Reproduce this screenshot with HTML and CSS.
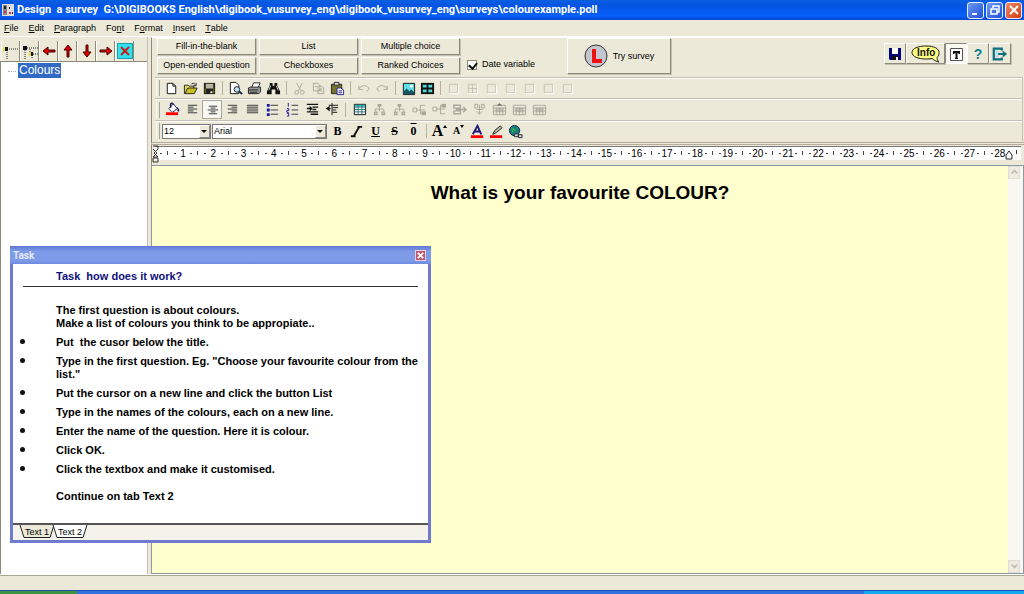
FILE: index.html
```html
<!DOCTYPE html>
<html lang="en">
<head>
<meta charset="utf-8">
<title>Design a survey</title>
<link rel="stylesheet" href="styles.css">
</head>
<body>
<svg class="defs" aria-hidden="true">
  <defs>
    <symbol id="arrow" viewBox="0 0 16 16"><path d="M2 8l5-4v3h7v2H7v3z" fill="#e00000" stroke="#400" stroke-width="1"/></symbol>
    <symbol id="tree" viewBox="0 0 16 16"><path d="M8 3v4M3.500 10V7.500h9V10M8 7v3" fill="none" stroke="#aaa89a"/><path d="M6 2h4v3H6zM2 10h4v4H2zM10 10h4v4h-4z" fill="#aaa89a"/><path d="M11.500 11.500h1v1h-1zM3.500 11.500h1v1h-1z" fill="#ece9d8"/></symbol>
    <symbol id="join" viewBox="0 0 16 16"><path d="M1 6.500h4v4H1zM5 8.500h4M9 3.500h5M9 3v10M9 8.500h5" fill="none" stroke="#aaa89a"/><path d="M10 10h5v4h-5z" fill="#aaa89a"/></symbol>
    <symbol id="cells" viewBox="0 0 16 16"><path d="M1.500 3.500h13v10h-13zM1 6.500h14M1 9.500h14M4.500 6v8M8 6v8M11.500 6v8" fill="none" stroke="#aaa89a"/><path d="M4 6h8v5H4z" fill="#aaa89a" opacity=".6"/></symbol>
    <symbol id="box" viewBox="0 0 16 16"><path d="M3.500 3.500h9v9h-9z" fill="none" stroke="#c6c3b5"/><path d="M13.500 4v9.500H4" fill="none" stroke="#fff"/></symbol>
    <symbol id="window" viewBox="0 0 16 16"><path d="M1 2h14v12H1z" fill="#111"/><path d="M3 4h4v3H3zM9 4h4v3H9zM3 9h4v3H3zM9 9h4v3H9z" fill="#50dcdc"/></symbol>
    <symbol id="floppy" viewBox="0 0 16 16"><path d="M2 2h12v12H3l-1-1z"/><path d="M5 2h6v6H5z" fill="#fff"/><path d="M5 10h6v4H5z" fill="#111"/><path d="M9 11h2v3H9z" fill="#fff"/></symbol>
  </defs>
</svg>

<header class="titlebar">
  <svg class="app-icon" viewBox="0 0 12 14"><path d="M0 1h12v12H0z" fill="#ddd"/><path d="M1 2h4v10H1z" fill="#888"/><path d="M2 3h2v3H2zM7 4h1v2H7zM10 9h1v2h-1z" fill="#222"/><path d="M7 9h2v2H7zM2 8h2v2H2z" fill="#c33"/></svg>
  <h1>Design&nbsp; a survey&nbsp; G:\DIGIBOOKS English\digibook_vusurvey_eng\digibook_vusurvey_eng\surveys\colourexample.poll</h1>
  <div class="window-buttons">
    <button aria-label="Minimize"><svg viewBox="0 0 16 16"><path d="M4 11h5v2H4z" fill="#fff"/></svg></button>
    <button aria-label="Restore"><svg viewBox="0 0 16 16"><path d="M6 6V4h6v6h-2M4 7h6v5H4z" fill="none" stroke="#fff" stroke-width="1.500"/></svg></button>
    <button class="close" aria-label="Close"><svg viewBox="0 0 16 16"><path d="M4 4l8 8M12 4l-8 8" stroke="#fff" stroke-width="2"/></svg></button>
  </div>
</header>

<nav class="menubar">
  <button><u>F</u>ile</button><button><u>E</u>dit</button><button><u>P</u>aragraph</button><button>Fo<u>n</u>t</button><button>F<u>o</u>rmat</button><button><u>I</u>nsert</button><button><u>T</u>able</button>
</nav>

<main class="workspace">
  <aside class="sidebar">
    <div class="tree-tools">
      <button aria-label="Add item"><svg viewBox="0 0 16 16"><path d="M4 6h12M4 7v9" stroke="#222" stroke-dasharray="1 1" fill="none"/><path d="M0 4h3v4H0z" fill="#e8e040"/><path d="M2 4h3v4H2z" fill="#111"/></svg></button>
      <button aria-label="Add child"><svg viewBox="0 0 16 16"><path d="M3 5h13M3 7v9M8 6v5h8M10 12v4" stroke="#222" stroke-dasharray="1 1" fill="none"/><path d="M1 3h4v4H1z" fill="#111"/><path d="M7 9h4v4H7z" fill="#e8e040"/><path d="M9 9h2v4H9z" fill="#111"/></svg></button>
      <button aria-label="Left"><svg viewBox="0 0 16 16"><use href="#arrow"/></svg></button>
      <button aria-label="Up"><svg class="up" viewBox="0 0 16 16"><use href="#arrow"/></svg></button>
      <button aria-label="Down"><svg class="down" viewBox="0 0 16 16"><use href="#arrow"/></svg></button>
      <button aria-label="Right"><svg class="flip" viewBox="0 0 16 16"><use href="#arrow"/></svg></button>
      <button aria-label="Delete"><svg viewBox="0 0 16 16"><path d="M.5.5h15v15H.5z" fill="#2fe3ee" stroke="#189aa8"/><path d="M4 4l8 8M12 4l-8 8" stroke="#d01818" stroke-width="2"/></svg></button>
    </div>
    <ul class="tree"><li><span>Colours</span></li></ul>
  </aside>

  <section class="content">
    <div class="panel">
      <div class="commands">
        <div class="question-types">
          <button>Fill-in-the-blank</button><button>List</button><button>Multiple choice</button>
          <button>Open-ended question</button><button>Checkboxes</button><button>Ranked Choices</button>
        </div>
        <label class="check"><input type="checkbox" checked><span>Date variable</span></label>
        <button class="try"><svg viewBox="0 0 24 24"><circle cx="12" cy="12" r="11" fill="#c3c5cf" stroke="#333"/><path d="M8 5h4v10h6v4H8z" fill="#f01010"/></svg>Try survey</button>
        <div class="quick">
          <button aria-label="Save"><svg viewBox="0 0 16 16" fill="#000078"><use href="#floppy"/></svg></button>
          <button class="info" aria-label="Info"><svg viewBox="0 0 30 18"><path d="M15 1C7 1 1 3.500 1 7.500S7 14 15 14c2 0 4 0 6-.5 2 1.500 4 3 7 3.500-1.500-1.500-2-3-2-4.500 2-1.300 2-3.500 2-5C28 3.500 23 1 15 1z" fill="#ffff84" stroke="#222"/><text x="6" y="11">Info</text></svg></button>
          <button class="pressed" aria-label="Text"><svg viewBox="0 0 16 16"><path d="M2.500 2.500h12v12h-12z" fill="#fff" stroke="#555"/><path d="M5 5h7v3h-1l-1-1H9.500v5h.5v1H7v-1h.5V7H7L6 8H5z" fill="#111"/></svg></button>
          <button class="help" aria-label="Help">?</button>
          <button aria-label="Exit"><svg viewBox="0 0 18 16"><path d="M11 4V2H2v12h9v-2M6 8h7" fill="none" stroke="#0b6f7c" stroke-width="2.500"/><path d="M12 4l5 4-5 4z" fill="#0b6f7c"/><path d="M4 4h3v8H4z" fill="#bde"/></svg></button>
        </div>
      </div>

      <div class="bar">
        <button aria-label="New"><svg viewBox="0 0 16 16"><path d="M3.500 2.500h6l3 3v8h-9zM9.500 2.500v3h3" fill="#fff" stroke="#111"/></svg></button>
        <button aria-label="Open"><svg viewBox="0 0 16 16"><path d="M1.500 13.500v-9h4l1 1h5v2" fill="#e8d860" stroke="#222"/><path d="M2 13.500l3-6h10l-3 6z" fill="#c8c020" stroke="#222"/><path d="M9 3q3-2 4 1M14 2v3h-3" fill="none" stroke="#222"/></svg></button>
        <button aria-label="Save file"><svg viewBox="0 0 16 16"><path d="M2 2h12v12H2z" fill="#222"/><path d="M4 3h8v5H4z" fill="#b8b5a0"/><path d="M3 8h1v5H3zM12 8h1v5h-1z" fill="#808000"/><path d="M9 11h2v2H9z" fill="#fff"/></svg></button>
        <i class="sep"></i>
        <button aria-label="Preview"><svg viewBox="0 0 16 16"><path d="M2.500 1.500h6l3 3v9h-9z" fill="#fff" stroke="#111"/><circle cx="9.500" cy="9" r="3" fill="#b8e6ee" stroke="#223"/><path d="M12 11l3 3" stroke="#124" stroke-width="2"/></svg></button>
        <button aria-label="Print"><svg viewBox="0 0 16 16"><path d="M5 7l2-5h7l-2 5" fill="#fff" stroke="#222"/><path d="M1.500 7.500l2-1h11v5l-2 2h-11z" fill="#999" stroke="#222"/><path d="M2 9.500h10M3 12h8" stroke="#222"/></svg></button>
        <button aria-label="Find"><svg viewBox="0 0 16 16"><path d="M4 2h3v3h2V2h3v3l3 6v3h-5V9H6v5H1v-3l3-6z" fill="#111"/><path d="M5 5L3 10M11 5l2 5" stroke="#ddd"/></svg></button>
        <i class="sep"></i>
        <button aria-label="Cut"><svg viewBox="0 0 16 16"><path d="M5 2l4 8M11 2l-4 8" stroke="#aaa89a"/><circle cx="5" cy="12" r="2" fill="none" stroke="#aaa89a"/><circle cx="11" cy="12" r="2" fill="none" stroke="#aaa89a"/></svg></button>
        <button aria-label="Copy"><svg viewBox="0 0 16 16"><path d="M2.500 2.500h5l2 2v6h-7zM7.500 5.500h4l2 2v6h-6zM4 6h3M9 8.500h3M9 10.500h3" fill="#ece9d8" stroke="#aaa89a"/></svg></button>
        <button aria-label="Paste"><svg viewBox="0 0 16 16"><path d="M1.500 3.500h11v10h-11z" fill="#77752c" stroke="#222"/><path d="M4.500 1.500h5v3h-5z" fill="#ddd" stroke="#222"/><path d="M7.500 7.500h4l3 2v5h-7zM9 10.500h4M9 12.500h4" fill="#fff" stroke="#228"/></svg></button>
        <i class="sep"></i>
        <button aria-label="Undo"><svg viewBox="0 0 16 16"><path d="M3 5v4h4M3 8q5-5 9-2t-1 5" fill="none" stroke="#aaa89a"/></svg></button>
        <button aria-label="Redo"><svg class="flip" viewBox="0 0 16 16"><path d="M3 5v4h4M3 8q5-5 9-2t-1 5" fill="none" stroke="#aaa89a"/></svg></button>
        <i class="sep"></i>
        <button aria-label="Picture"><svg viewBox="0 0 16 16"><path d="M2.500 2.500h12v12h-12z" fill="#60e0e6" stroke="#111"/><path d="M3 14v-3l3-3 3 3 2-2 3 3v2z" fill="#1b5563"/><circle cx="11" cy="5.500" r="1.500" fill="#fff"/></svg></button>
        <button aria-label="Window"><svg viewBox="0 0 16 16"><use href="#window"/></svg></button>
        <i class="sep"></i>
        <button aria-label="No border"><svg><use href="#box"/></svg></button>
        <button aria-label="All borders"><svg viewBox="0 0 16 16"><use href="#box"/><path d="M8 3v10M3 8h10" stroke="#c6c3b5"/></svg></button>
        <button aria-label="Outer border"><svg><use href="#box"/></svg></button>
        <button aria-label="Left border"><svg><use href="#box"/></svg></button>
        <button aria-label="Right border"><svg><use href="#box"/></svg></button>
        <button aria-label="Top border"><svg><use href="#box"/></svg></button>
        <button aria-label="Bottom border"><svg><use href="#box"/></svg></button>
      </div>

      <div class="bar wide">
        <button aria-label="Fill colour"><svg viewBox="0 0 16 16"><path d="M4 7l5-5 4 5-5 4z" fill="#fff" stroke="#226"/><path d="M6 6V2q2-2 3 1M13 6q2 2 1 4" fill="none" stroke="#115" stroke-width="1.500"/><path d="M1 11h13v3H1z" fill="#f00"/></svg></button>
        <button aria-label="Align left"><svg viewBox="0 0 16 16"><path d="M3 3.500h10M3 5.500h6M3 7.500h10M3 9.500h6M3 11.500h10" stroke="#333"/></svg></button>
        <button class="pressed" aria-label="Align centre"><svg viewBox="0 0 16 16"><path d="M4 4.500h9M6 6.500h5M3 8.500h11M6 10.500h5M4 12.500h9" stroke="#333"/></svg></button>
        <button aria-label="Align right"><svg viewBox="0 0 16 16"><path d="M3 3.500h10M7 5.500h6M3 7.500h10M7 9.500h6M3 11.500h10" stroke="#333"/></svg></button>
        <button aria-label="Justify"><svg viewBox="0 0 16 16"><path d="M2 3.500h12M2 5.500h12M2 7.500h12M2 9.500h12M2 11.500h12" stroke="#333"/></svg></button>
        <button aria-label="Bullets"><svg viewBox="0 0 16 16"><path d="M6 3.500h8M6 8.500h8M6 13h8" stroke="#333"/><path d="M2 2h3v3H2zM2 7h3v3H2zM2 12h3v3H2z" fill="#1515a0"/></svg></button>
        <button aria-label="Numbering"><svg viewBox="0 0 16 16"><path d="M7 3.500h7M7 8.500h7M7 13h7" stroke="#333"/><path d="M3.500 1v4M2 7h2v2H2v2h2M2 12h2v3H2" fill="none" stroke="#1515a0"/></svg></button>
        <button aria-label="Outdent"><svg viewBox="0 0 16 16"><path d="M2 2.500h12M8 5.500h6M8 8h4M2 10.500h12M6 13h8M2 7h5" stroke="#111" stroke-width="1.500"/><path d="M5 4l3 3-3 3z" fill="#111"/></svg></button>
        <button aria-label="Indent"><svg viewBox="0 0 16 16"><path d="M4 3.500h10M8 6h6M8 8.500h4M8 11h5M1 7h5M7.500 1v13" stroke="#111"/><path d="M5 4L1 7l4 3z" fill="#111"/></svg></button>
        <i class="sep"></i>
        <button aria-label="Insert table"><svg viewBox="0 0 16 16"><path d="M2.500 2.500h12v11h-12z" fill="#fff" stroke="#111"/><path d="M3 3h11v2H3z" fill="#2bb8b8"/><path d="M6.500 3v10M10.500 3v10M3 5.500h11M3 8h11M3 10.500h11" stroke="#267676"/></svg></button>
        <button aria-label="Add row above"><svg><use href="#tree"/></svg></button>
        <button aria-label="Add row below"><svg><use href="#tree"/></svg></button>
        <button aria-label="Add column left"><svg><use href="#join"/></svg></button>
        <button aria-label="Add column right"><svg class="turn"><use href="#join"/></svg></button>
        <button aria-label="Delete column"><svg viewBox="0 0 16 16"><path d="M2 3.500h7v3H2zM2 9.500h7v3H2zM4 8h10M12 5l3 3-3 3" fill="none" stroke="#aaa89a" stroke-width="1.500"/></svg></button>
        <button aria-label="Delete row"><svg viewBox="0 0 16 16"><path d="M3 2.500h3v4H3zM10 2.500h3v4h-3zM8 3v10M5 10l3 3 3-3M5 8h6" fill="none" stroke="#aaa89a"/></svg></button>
        <button aria-label="Merge cells"><svg viewBox="0 0 16 16"><use href="#cells"/><path d="M5 4l3-3 3 3z" fill="#77756b"/></svg></button>
        <button aria-label="Split cells"><svg><use href="#cells"/></svg></button>
        <button aria-label="Cell properties"><svg><use href="#cells"/></svg></button>
      </div>

      <div class="bar">
        <span class="combo size"><select aria-label="Font size"><option>12</option></select><i></i></span>
        <span class="combo face"><select aria-label="Font"><option>Arial</option></select><i></i></span>
        <button class="letter" aria-label="Bold">B</button>
        <button aria-label="Italic"><svg viewBox="0 0 16 16"><path d="M9 3h5M2 13h5M11 3l-6 10" stroke="#111" stroke-width="2"/></svg></button>
        <button class="letter" aria-label="Underline"><u>U</u></button>
        <button class="letter" aria-label="Strikethrough"><s>S</s></button>
        <button class="letter over" aria-label="Overline">0</button>
        <i class="sep"></i>
        <button class="letter big" aria-label="Grow font">A<svg viewBox="0 0 4 8"><path d="M0 3l2-3 2 3z"/></svg></button>
        <button class="letter small" aria-label="Shrink font">A<svg viewBox="0 0 4 8"><path d="M0 0l2 3 2-3z"/></svg></button>
        <button aria-label="Font colour"><svg viewBox="0 0 16 16"><path d="M3 11L8 2l4 9M5 8h6" fill="none" stroke="#19197c" stroke-width="2"/><path d="M1 12h13v3H1z" fill="#f00"/></svg></button>
        <button aria-label="Highlight"><svg viewBox="0 0 16 16"><path d="M4 11l2-4 6-5 2 2-6 5z" fill="#b8b5a0" stroke="#222"/><path d="M1 12h13v3H1z" fill="#f00"/></svg></button>
        <button aria-label="Hyperlink"><svg viewBox="0 0 16 16"><circle cx="7" cy="7" r="5.500" fill="#167e86" stroke="#123"/><path d="M4 4l4 1-1 3-3 1z" fill="#33a04a"/><path d="M7 10.500h4v3H7zM11 11.500h4v3h-4z" fill="#ddd" stroke="#222"/></svg></button>
      </div>
    </div>

    <div class="ruler">
      <svg class="indent" viewBox="0 0 8 18"><path d="M1 1h5v3L2 8l4 4H1M1 4l4 4-4 4M1 13h5v4H1z" fill="none" stroke="#333"/></svg>
      <ol>
        <li>1</li><li>2</li><li>3</li><li>4</li><li>5</li><li>6</li><li>7</li><li>8</li><li>9</li><li>10</li><li>11</li><li>12</li><li>13</li><li>14</li><li>15</li><li>16</li><li>17</li><li>18</li><li>19</li><li>20</li><li>21</li><li>22</li><li>23</li><li>24</li><li>25</li><li>26</li><li>27</li><li>28</li>
      </ol>
      <svg class="margin" viewBox="0 0 16 14"><path d="M1 13V9l3-4 3 4v4z" fill="#fff" stroke="#222"/><path d="M11.500 4v4" stroke="#333"/></svg>
    </div>

    <div class="editor">
      <div class="page"><h2>What is your favourite COLOUR?</h2></div>
      <div class="scroll">
        <button aria-label="Scroll up"><svg viewBox="0 0 12 12"><path d="M3 7l3-3 3 3" fill="none" stroke="#c3c1b4" stroke-width="2"/></svg></button>
        <button aria-label="Scroll down"><svg viewBox="0 0 12 12"><path d="M3 4l3 3 3-3" fill="none" stroke="#c3c1b4" stroke-width="2"/></svg></button>
      </div>
    </div>
  </section>
</main>

<div class="status"></div>
<footer class="taskbar"><span class="start"></span><span class="tray"></span></footer>

<section class="task" aria-label="Task">
  <header><h2>Task</h2><button aria-label="Close task"><svg viewBox="0 0 10 10"><path d="M2 2l6 6M8 2L2 8" stroke="#fff" stroke-width="2"/></svg></button></header>
  <div class="task-body">
    <h3>Task&nbsp; how does it work?</h3>
    <p>The first question is about colours.<br>Make a list of colours you think to be appropiate..</p>
    <ul>
      <li>Put&nbsp; the cusor below the title.</li>
      <li>Type in the first question. Eg. "Choose your favourite colour from the list."</li>
      <li>Put the cursor on a new line and click the button List</li>
      <li>Type in the names of the colours, each on a new line.</li>
      <li>Enter the name of the question. Here it is colour.</li>
      <li>Click OK.</li>
      <li>Click the textbox and make it customised.</li>
    </ul>
    <p>Continue on tab Text 2</p>
  </div>
  <div class="tabs">
    <button class="active"><svg viewBox="0 0 36 14" preserveAspectRatio="none"><path d="M1 0l4 12.500h26L35 0"/></svg><span>Text 1</span></button>
    <button><svg viewBox="0 0 36 14" preserveAspectRatio="none"><path d="M1 0l4 12.500h26L35 0"/></svg><span>Text 2</span></button>
  </div>
</section>
</body>
</html>
```

FILE: styles.css
```css
:root {
  --face: #ece9d8;
  --shadow: #8c897a;
  --sans: "Liberation Sans", Arial, sans-serif;
}
* { box-sizing: border-box; }
body {
  margin: 0;
  height: 100vh;
  display: flex;
  flex-direction: column;
  overflow: hidden;
  background: var(--face);
  color: #000;
  font: 9px/13px var(--sans);
}
button, select, input { font: inherit; color: inherit; margin: 0; }
button {
  display: flex;
  align-items: center;
  justify-content: center;
  padding: 0;
  border: 0;
  background: none;
  white-space: nowrap;
}
h1, h2, h3, p, ul, ol { margin: 0; padding: 0; }
ul, ol { list-style: none; }
svg { width: 16px; height: 16px; flex: none; }
.defs { position: absolute; width: 0; height: 0; }
.flip { transform: scaleX(-1); }
.turn { transform: scaleY(-1); }
.up { transform: rotate(90deg); }
.down { transform: rotate(-90deg); }

.titlebar {
  display: flex;
  align-items: center;
  gap: 3px;
  flex: none;
  height: 20px;
  padding: 0 2px;
  background: linear-gradient(#0a5fe0, #0453e4 30%, #0661fb 80%, #0344cc);
  color: #fff;
}
.titlebar h1 { flex: 1; font: bold 11px/16px Roboto, sans-serif; white-space: nowrap; }
.app-icon { width: 12px; height: 14px; }
.window-buttons { display: flex; gap: 2px; }
.window-buttons button {
  width: 17px;
  height: 17px;
  border: 1px solid #e8f0ff;
  border-radius: 3px;
  background: linear-gradient(135deg, #6f9bf5, #1f4fd4);
}
.window-buttons .close { background: linear-gradient(135deg, #f08a68, #d23a10); }

.menubar { display: flex; flex: none; gap: 10px; height: 17px; padding-left: 4px; border-bottom: 1px solid #fff; }

.workspace { flex: 1; min-height: 0; display: flex; gap: 3px; border-bottom: 1px solid #fff; }
.sidebar { flex: none; width: 148px; display: flex; flex-direction: column; border-right: 1px solid #c4c1b2; }
.tree-tools { display: flex; margin-top: 4px; height: 21px; padding-left: 1px; border-bottom: 1px solid var(--shadow); }
.tree-tools button { width: 19px; border-right: 1px solid var(--shadow); border-left: 1px solid #fff; }
.tree { flex: 1; padding: 1px 0 0 17px; background: #fff; border-left: 1px solid var(--shadow); }
.tree span { display: inline-block; padding: 0 1px; background: #316ac5; color: #fff; font: 12px/15px "Liberation Sans", sans-serif; }
.tree li { position: relative; }
.tree li::before { content: ""; position: absolute; left: -10px; top: 8px; width: 8px; border-top: 1px dotted #aaa; }

.content { flex: 1; min-width: 0; display: flex; flex-direction: column; }
.panel { flex: none; padding: 0 1px 1px 3px; border-top: 1px solid #fff; border-left: 1px solid var(--shadow); border-bottom: 3px double #b5ab9c; }
.commands { display: flex; align-items: flex-start; height: 39px; padding: 0 12px 0 2px; }
.question-types { display: grid; grid-template-columns: repeat(3, 99px); gap: 2px 3px; }
.question-types button, .try, .quick button {
  border: 1px solid var(--shadow);
  border-top-color: #fff;
  border-left-color: #fff;
  box-shadow: 1px 1px 0 #c4c1b2;
  background: var(--face);
}
.question-types button { height: 17px; }
.check { display: flex; align-items: center; gap: 5px; margin: 20px 0 0 7px; }
.check input {
  appearance: none;
  width: 10px;
  height: 10px;
  background: #fff;
  border: 1px solid var(--shadow);
  position: relative;
}
.check input:checked::after {
  content: "";
  position: absolute;
  left: 2px;
  top: 0;
  width: 4px;
  height: 6px;
  border: solid #111;
  border-width: 0 2px 2px 0;
  transform: rotate(40deg);
}
.try { width: 104px; height: 36px; gap: 5px; margin-left: 32px; }
.try svg { width: 24px; height: 24px; }
.quick { display: flex; gap: 0; margin: 5px 0 0 auto; }
.quick button { width: 22px; height: 21px; }
.quick .info { width: 39px; }
.info svg { width: 30px; height: 18px; }
.info text { font: bold 10px "Liberation Sans", sans-serif; fill: #111; }
.quick .pressed { background: #f8f7f2; border-color: var(--shadow) #fff #fff var(--shadow); box-shadow: none; }
.quick .help { font: bold 14px/18px "Liberation Sans", sans-serif; color: #0b7f90; }

.bar { display: flex; align-items: center; height: 21px; padding-left: 6px; border-top: 1px solid #c4c1b2; border-right: 1px solid #c4c1b2; box-shadow: inset 0 1px 0 #fff; }
.bar::before { content: ""; width: 2px; height: 16px; margin-left: -5px; margin-right: 2px; border-left: 1px solid #fff; border-right: 1px solid #aaa797; }
.bar button { width: 19px; height: 19px; }
.bar svg { width: 15px; height: 15px; }
.wide { height: 22px; }
.bar.wide button { width: 20px; }
.bar .pressed { background: #f8f7f2; border: 1px solid #aaa797; }
.sep { width: 1px; height: 14px; margin: 0 3px; background: #b5b2a2; }
.combo { position: relative; height: 15px; margin-right: 1px; }
.combo select {
  appearance: none;
  width: 100%;
  height: 15px;
  padding: 0 0 0 1px;
  border: 1px solid #777;
  border-radius: 0;
  background: #fff;
  line-height: 13px;
  vertical-align: top;
}
.size { width: 49px; }
.face { width: 115px; margin-right: 1px; }
.combo i {
  position: absolute;
  right: 1px;
  top: 1px;
  width: 11px;
  height: 13px;
  background: var(--face);
  border: 1px solid #fff;
  border-right-color: #888;
  border-bottom-color: #888;
  pointer-events: none;
}
.combo i::after { content: ""; position: absolute; left: 1px; top: 4px; border: 3px solid transparent; border-top-color: #111; }
.letter { font: bold 12px/14px "Liberation Serif", serif; }
.over { text-decoration: overline; }
.bar .big { font-size: 16px; }
.bar .small { font-size: 10px; }
.bar .letter svg { width: 4px; height: 8px; align-self: flex-start; margin-top: 3px; }

.ruler { position: relative; flex: none; display: flex; height: 20px; padding: 2px 18px 5px 7px; border-left: 1px solid var(--shadow); }
.ruler::before { content: ""; position: absolute; left: 3px; right: 3px; top: 1px; height: 13px; background: #fff; border-top: 1px solid #777; }
.ruler ol { position: relative; flex: 1; display: flex; }
.ruler li {
  flex: 1;
  display: flex;
  justify-content: center;
  min-width: 0;
  padding-left: 18px;
  background:
    linear-gradient(#444, #444) 1px 6px / 2px 1px no-repeat,
    linear-gradient(#444, #444) 8px 4px / 1px 4px no-repeat,
    linear-gradient(#444, #444) 15px 6px / 2px 1px no-repeat;
  font-size: 10px;
}
.indent { position: absolute; left: 0; top: 0; width: 8px; height: 18px; }
.margin { position: absolute; right: 3px; top: 1px; width: 16px; height: 14px; }

.editor { flex: 1; min-height: 0; display: flex; border: 1px solid #8f9aa0; }
.page { flex: 1; background: #ffffce; padding-top: 15px; text-align: center; }
.page h2 { font: bold 19px/24px var(--sans); }
.scroll { width: 15px; display: flex; flex-direction: column; justify-content: space-between; background: #f8f7f2; }
.scroll button { width: 12px; height: 13px; background: #eeece2; border: 1px solid #e0ddd0; }
.scroll svg { width: 11px; height: 11px; }

.status { flex: none; height: 15px; border-top: 1px solid #aaa797; }
.taskbar { flex: none; display: flex; justify-content: space-between; height: 4px; background: #3072e0; border-top: 1px solid #1e4fae; }
.start { width: 77px; background: #3c9440; }
.tray { width: 160px; background: #14aaf0; }

.task {
  position: absolute;
  left: 10px;
  top: 246px;
  width: 421px;
  padding: 0 3px 3px;
  background: #6f7bcf;
}
.task > header { display: flex; align-items: center; justify-content: space-between; height: 18px; margin: 0 -3px; padding: 0 5px 0 3px; background: linear-gradient(#6279d4, #7d9be8 30%, #7d9be8 80%, #6f8ae0); }
.task header h2 { font: bold 10px/13px Roboto, sans-serif; color: #e4eafc; }
.task header button { width: 11px; height: 11px; background: #bd5a70; border: 1px solid #e3cfe3; }
.task header svg { width: 9px; height: 9px; }
.task-body { padding: 6px 10px 20px 10px; background: #fff; font: bold 11px/13px var(--sans); }
.task-body h3 { padding: 0 0 3px 33px; margin-bottom: 17px; border-bottom: 1px solid #333; font: inherit; color: #10107c; }
.task-body p { padding-left: 33px; }
.task-body li { position: relative; margin: 6px 0; padding-left: 33px; }
.task-body li::before { content: ""; position: absolute; left: -3px; top: 3px; width: 5px; height: 5px; border-radius: 50%; background: #111; }
.task-body ul + p { margin-top: 14px; }
.tabs { display: flex; height: 17px; padding-left: 6px; background: #f4f2ea; border-top: 2px solid #555; }
.tabs button { position: relative; width: 36px; height: 14px; margin-right: -3px; }
.tabs svg { position: absolute; left: 0; top: 0; width: 36px; height: 14px; fill: #fff; stroke: #222; }
.tabs .active svg { fill: var(--face); }
.tabs span { position: relative; }
```
